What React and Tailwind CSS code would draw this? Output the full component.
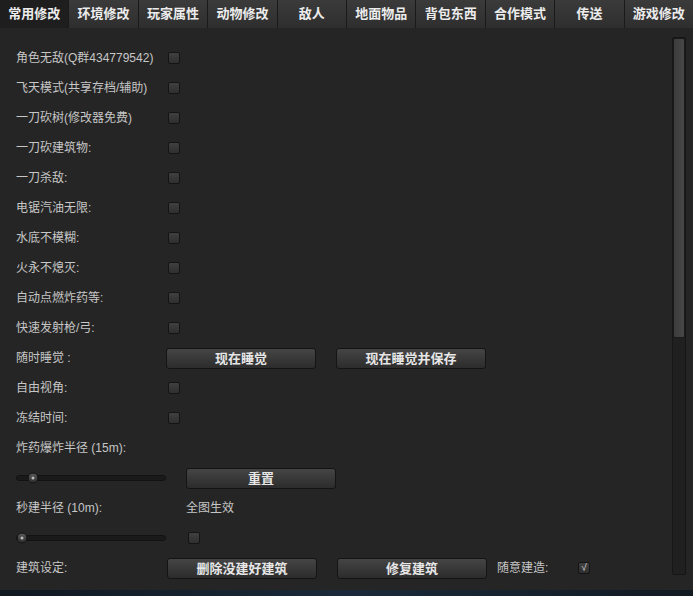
import { useState } from 'react';

const tabs = ['常用修改', '环境修改', '玩家属性', '动物修改', '敌人', '地面物品', '背包东西', '合作模式', '传送', '游戏修改'];

const toggles = [
  '角色无敌(Q群434779542)',
  '飞天模式(共享存档/辅助)',
  '一刀砍树(修改器免费)',
  '一刀砍建筑物:',
  '一刀杀敌:',
  '电锯汽油无限:',
  '水底不模糊:',
  '火永不熄灭:',
  '自动点燃炸药等:',
  '快速发射枪/弓:',
];

function Box({ checked, onClick }) {
  return (
    <button
      onClick={onClick}
      className="w-[12px] h-[12px] rounded-[2px] border border-[#141414] bg-gradient-to-b from-[#404040] to-[#2f2f2f] flex items-center justify-center text-[10px] leading-none text-[#d8d8d8]"
    >
      {checked ? '√' : ''}
    </button>
  );
}

function Btn({ children }) {
  return (
    <button className="w-[150px] h-[21px] rounded-[3px] border border-[#141414] bg-gradient-to-b from-[#454545] to-[#2c2c2c] text-[13px] font-bold text-[#e6e6e6] leading-none">
      {children}
    </button>
  );
}

function Slider({ value }) {
  return (
    <div className="relative w-[150px] h-[6px] rounded-full bg-[#1a1a1a] border border-[#121212]">
      <div
        className="absolute top-1/2 -translate-y-1/2 -translate-x-1/2 w-[11px] h-[11px] rounded-full bg-gradient-to-b from-[#5a5a5a] to-[#2e2e2e] border border-[#151515] flex items-center justify-center"
        style={{ left: value }}
      >
        <div className="w-[3px] h-[3px] rounded-full bg-[#bbbbbb]" />
      </div>
    </div>
  );
}

function Row({ children }) {
  return <div className="h-[30px] flex items-center">{children}</div>;
}

export default function App() {
  const [active, setActive] = useState(0);
  const [checks, setChecks] = useState({ build: true });
  const flip = (k) => setChecks((c) => ({ ...c, [k]: !c[k] }));

  return (
    <div
      className="w-[693px] h-[596px] bg-[#252525] flex flex-col overflow-hidden text-[#c6c6c6]"
      style={{ fontFamily: '"Liberation Sans", "Noto Sans CJK SC", sans-serif' }}
    >
      <div className="h-[28px] flex shrink-0 bg-[#2c2c2c]">
        {tabs.map((t, i) => (
          <button
            key={t}
            onClick={() => setActive(i)}
            className={
              'flex-1 h-full flex items-center justify-center text-[13px] font-bold text-[#ececec] border-r border-[#1a1a1a] last:border-r-0 ' +
              (i === active
                ? 'bg-[#1e1e1e]'
                : 'bg-gradient-to-b from-[#3b3b3b] to-[#2e2e2e]')
            }
          >
            {t}
          </button>
        ))}
      </div>

      <div className="flex-1 flex">
        <div className="flex-1 pl-4 pt-[15px] text-[12px]">
          {toggles.map((t, i) => (
            <Row key={t}>
              <span className="w-[152px]">{t}</span>
              <Box checked={checks[i]} onClick={() => flip(i)} />
            </Row>
          ))}
          <Row>
            <span className="w-[150px]">随时睡觉 :</span>
            <Btn>现在睡觉</Btn>
            <span className="w-[20px]" />
            <Btn>现在睡觉并保存</Btn>
          </Row>
          <Row>
            <span className="w-[152px]">自由视角:</span>
            <Box checked={checks.free} onClick={() => flip('free')} />
          </Row>
          <Row>
            <span className="w-[152px]">冻结时间:</span>
            <Box checked={checks.freeze} onClick={() => flip('freeze')} />
          </Row>
          <Row>
            <span>炸药爆炸半径 (15m):</span>
          </Row>
          <Row>
            <Slider value={16} />
            <span className="w-[20px]" />
            <Btn>重置</Btn>
          </Row>
          <Row>
            <span className="w-[170px]">秒建半径 (10m):</span>
            <span>全图生效</span>
          </Row>
          <Row>
            <Slider value={5} />
            <span className="w-[22px]" />
            <Box checked={checks.all} onClick={() => flip('all')} />
          </Row>
          <Row>
            <span className="w-[151px]">建筑设定:</span>
            <Btn>删除没建好建筑</Btn>
            <span className="w-[20px]" />
            <Btn>修复建筑</Btn>
            <span className="w-[91px] pl-[10px]">随意建造:</span>
            <Box checked={checks.build} onClick={() => flip('build')} />
          </Row>
        </div>

        <div className="w-[21px] pt-[9px] pb-[15px] pr-[7px] flex flex-col">
          <div className="flex-1 w-[14px] rounded-[2px] border border-[#161616] bg-[#202020] flex flex-col">
            <div className="h-[300px] rounded-[2px] border border-[#1a1a1a] bg-gradient-to-r from-[#3c3c3c] to-[#474747]" />
          </div>
        </div>
      </div>

      <div className="h-[6px] shrink-0 bg-gradient-to-r from-[#101820] via-[#1a2a3a] to-[#121a22]" />
    </div>
  );
}
